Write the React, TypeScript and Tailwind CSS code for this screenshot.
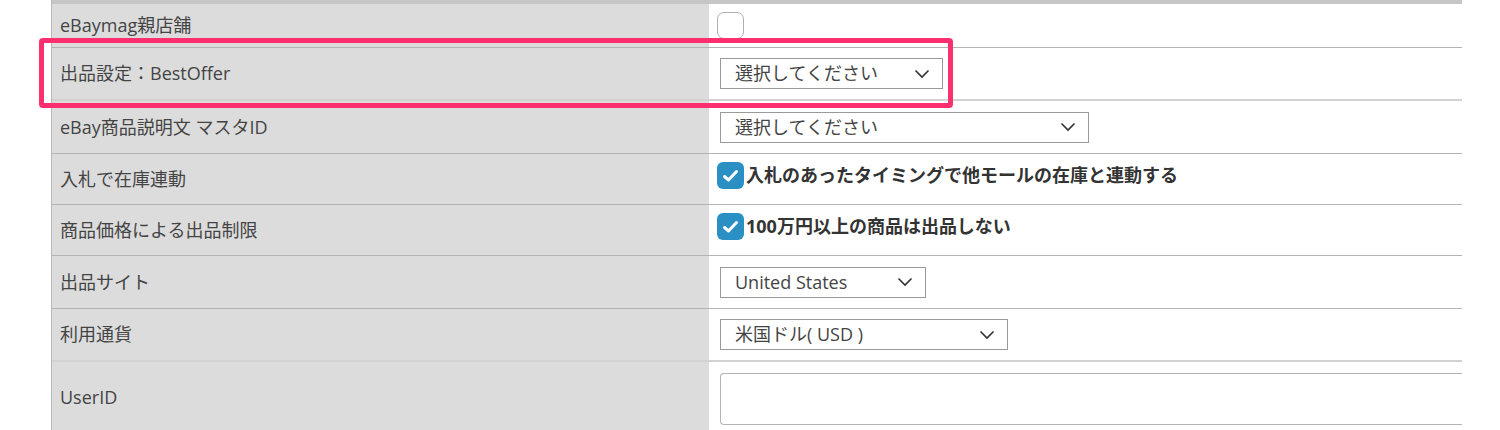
import React from "react";

const font = { fontFamily: '"Open Sans", "Noto Sans CJK JP", sans-serif' };

function Chevron() {
  return (
    <svg width="16" height="10" viewBox="0 0 16 10" className="shrink-0">
      <path d="M1.5 1.5 L8 8 L14.5 1.5" fill="none" stroke="#333" strokeWidth="1.6" />
    </svg>
  );
}

function Select({ value, width }: { value: string; width: string }) {
  return (
    <div
      className={`flex h-[31px] items-center justify-between border border-[#9a9a9a] bg-white pl-[14px] pr-[12px] text-[18px] text-[#444] ${width}`}
    >
      <span>{value}</span>
      <Chevron />
    </div>
  );
}

function Checked({ label }: { label: string }) {
  return (
    <div className="flex items-center">
      <div className="flex size-[27px] items-center justify-center rounded-[6px] bg-[#2a8fc2]">
        <svg width="17" height="14" viewBox="0 0 17 14">
          <path d="M2.5 7.5 L6.5 11 L14.5 2.5" fill="none" stroke="#fff" strokeWidth="3" strokeLinecap="round" strokeLinejoin="round" />
        </svg>
      </div>
      <span className="ml-[2px] text-[18px] font-bold text-[#333]">{label}</span>
    </div>
  );
}

function Row({
  label,
  h,
  border = "border-[#b4b4b4]",
  children,
  align = "items-center",
}: {
  label: string;
  h: string;
  border?: string;
  children?: React.ReactNode;
  align?: string;
}) {
  return (
    <div className={`flex border-b ${border} ${h}`}>
      <div className="flex w-[657px] items-center bg-[#dcdcdc] pl-[8px] text-[18px] text-[#444]">{label}</div>
      <div className={`flex flex-1 bg-white pl-[11px] ${align}`}>{children}</div>
    </div>
  );
}

export default function App() {
  return (
    <div className="relative h-[430px] w-[1500px] overflow-hidden bg-white" style={font}>
      <div className="ml-[51px] w-[1411px] border-l border-[#b8b8b8]">
        <div className="h-[4px] bg-[#c6c6c6]" />
        <Row label="eBaymag親店舗" h="h-[44px]" align="items-start pt-[8px]">
          <div className="ml-[-3px] size-[27px] rounded-[7px] border border-[#b0b0b0] bg-white" />
        </Row>
        <Row label="出品設定：BestOffer" h="h-[53px]" border="border-b-2 border-[#d2d2d2]">
          <Select value="選択してください" width="w-[223px]" />
        </Row>
        <Row label="eBay商品説明文 マスタID" h="h-[53px]">
          <Select value="選択してください" width="w-[369px]" />
        </Row>
        <Row label="入札で在庫連動" h="h-[51px]" align="items-start pt-[8px]">
          <div className="ml-[-3px]">
            <Checked label="入札のあったタイミングで他モールの在庫と連動する" />
          </div>
        </Row>
        <Row label="商品価格による出品制限" h="h-[51px]" align="items-start pt-[8px]">
          <div className="ml-[-3px]">
            <Checked label="100万円以上の商品は出品しない" />
          </div>
        </Row>
        <Row label="出品サイト" h="h-[53px]">
          <Select value="United States" width="w-[206px]" />
        </Row>
        <Row label="利用通貨" h="h-[53px]" border="border-b-2 border-[#d2d2d2]">
          <Select value="米国ドル( USD )" width="w-[288px]" />
        </Row>
        <Row label="UserID" h="h-[72px]" align="items-start pt-[11px]">
          <div className="h-[52px] flex-1 rounded-l-[4px] border border-r-0 border-[#b4b4b4] bg-white" />
        </Row>
      </div>
      <div className="absolute left-[39px] top-[38px] h-[70px] w-[914px] rounded-[4px] border-[5px] border-[#fe2f6e]" />
    </div>
  );
}
